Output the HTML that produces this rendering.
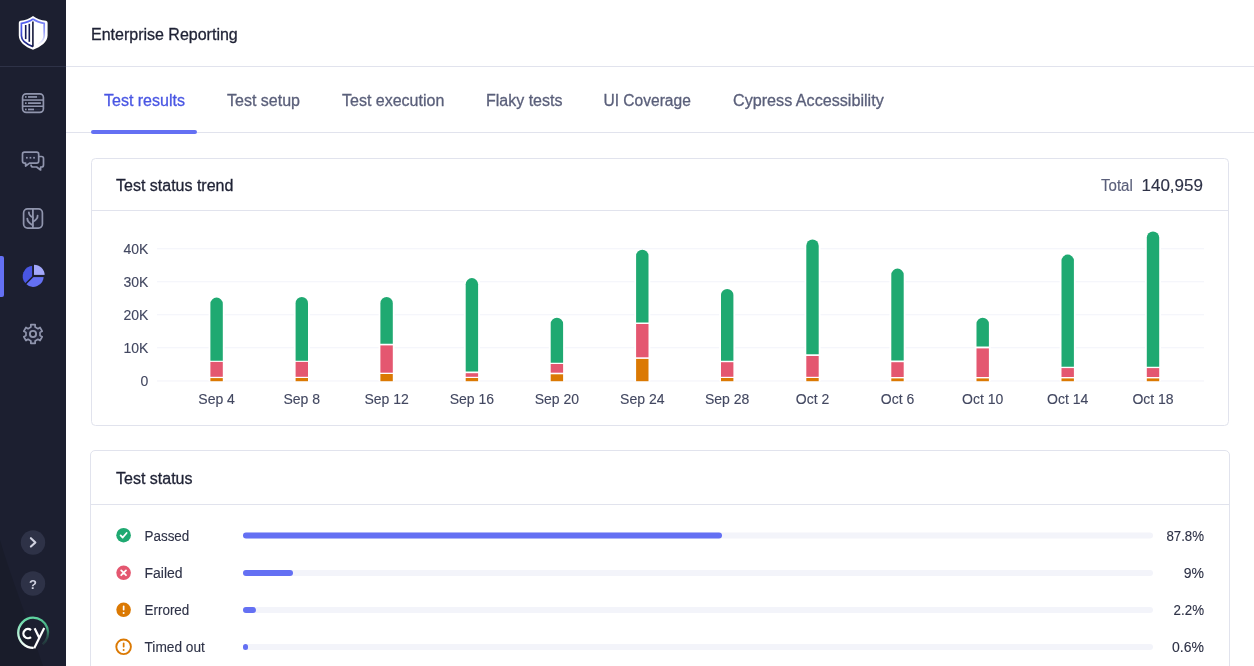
<!DOCTYPE html>
<html><head><meta charset="utf-8">
<style>
html,body{margin:0;padding:0;width:1254px;height:666px;overflow:hidden;background:#fff;}
svg{display:block;will-change:transform;}
text{font-family:"Liberation Sans",sans-serif;}
</style></head><body>
<svg width="1254" height="666" viewBox="0 0 1254 666">
<defs>
<linearGradient id="shl" gradientUnits="userSpaceOnUse" x1="0" y1="19" x2="0" y2="47">
<stop offset="0" stop-color="#5a66f4"/><stop offset="0.45" stop-color="#4450de"/><stop offset="1" stop-color="#141a6a"/>
</linearGradient>
<linearGradient id="shr" gradientUnits="userSpaceOnUse" x1="0" y1="19" x2="0" y2="45">
<stop offset="0" stop-color="#6a74f4"/><stop offset="0.5" stop-color="#9aa1f8"/><stop offset="1" stop-color="#ffffff"/>
</linearGradient>
<linearGradient id="cyl" gradientUnits="userSpaceOnUse" x1="0" y1="648" x2="0" y2="618">
<stop offset="0" stop-color="#ffffff"/><stop offset="0.45" stop-color="#b5f0d6"/><stop offset="1" stop-color="#5fd4a0"/>
</linearGradient>
<linearGradient id="cyr" gradientUnits="userSpaceOnUse" x1="33" y1="618" x2="44" y2="646">
<stop offset="0" stop-color="#5fd4a0"/><stop offset="0.5" stop-color="#44a880"/><stop offset="1" stop-color="#2a5a4c" stop-opacity="0.2"/>
</linearGradient>
</defs>
<!-- sidebar -->
<rect x="0" y="0" width="66" height="666" fill="#1c1f30"/>
<rect x="0" y="66" width="66" height="1" fill="#2e3247"/>
<path d="M0,540 C10,575 28,620 43,666 L0,666 Z" fill="#191c2a"/>
<!-- shield logo -->
<path d="M33,15.9 C36.5,18.6 41,20 46,20.8 Q47.6,21.1 47.6,22.8 L47.6,35.5 C47.6,41.8 41,46.8 33,49.8 C25,46.8 18.8,41.8 18.8,35.5 L18.8,22.8 Q18.8,21.1 20.4,20.8 C25.4,20 29.5,18.6 33,15.9 Z" fill="#fff"/>
<path d="M33,19 C29.8,21.4 26,22.6 21.4,23.4 L21.4,35.8 C21.4,40.4 26.5,44.2 33,46.6" fill="none" stroke="url(#shl)" stroke-width="1.7"/>
<path d="M33,19 C36.2,21.4 40,22.6 44.2,23.4 L44.2,35.8 C44.2,39.5 41.5,42.3 38,44.4" fill="none" stroke="url(#shr)" stroke-width="1.7"/>
<rect x="24.9" y="25" width="1.6" height="14.1" fill="#141a5a"/>
<rect x="28.5" y="23.8" width="1.6" height="18" fill="#141a5a"/>
<rect x="32.1" y="21.5" width="1.6" height="25.2" fill="#161a3e"/>
<!-- database icon -->
<rect x="22.6" y="93.8" width="20.8" height="18.6" rx="3.6" fill="none" stroke="#9095ad" stroke-width="1.7"/>
<rect x="22.6" y="99.3" width="20.8" height="1.5" fill="#9095ad"/>
<rect x="22.6" y="105.5" width="20.8" height="1.5" fill="#9095ad"/>
<g fill="#2a2d42"><rect x="28" y="96.1" width="12.5" height="1.7"/><rect x="28" y="102.3" width="12.5" height="1.7"/><rect x="28" y="108.6" width="12.5" height="1.7"/></g>
<g fill="#9095ad">
<rect x="25" y="96.1" width="1.6" height="1.7"/><rect x="28" y="96.1" width="9" height="1.7"/>
<rect x="25" y="102.3" width="1.6" height="1.7"/><rect x="28" y="102.3" width="12.9" height="1.7"/>
<rect x="25" y="108.6" width="1.6" height="1.7"/><rect x="28" y="108.6" width="6" height="1.7"/>
</g>
<!-- chat icon -->
<g fill="none" stroke="#9095ad" stroke-width="1.7" stroke-linejoin="round">
<path d="M39,156.5 H41.5 Q43.5,156.5 43.5,158.5 V165 Q43.5,167 41.5,167 H40.6 L40.6,170 L36.6,167 H33 Q31,167 31,164.5"/>
<path d="M24.5,152.2 H36.6 Q38.7,152.2 38.7,154.2 V161 Q38.7,163.1 36.6,163.1 H29.6 L25.6,166 L25.6,163.1 H24.5 Q22.5,163.1 22.5,161 V154.2 Q22.5,152.2 24.5,152.2 Z" fill="#22253a"/>
</g>
<g fill="#9095ad"><rect x="26" y="156.9" width="1.7" height="1.7"/><rect x="29.6" y="156.9" width="1.7" height="1.7"/><rect x="33.2" y="156.9" width="1.7" height="1.7"/></g>
<!-- tree icon -->
<rect x="23.6" y="208.9" width="18.8" height="19.2" rx="4" fill="#23263a" stroke="#9095ad" stroke-width="1.7"/>
<g fill="none" stroke="#9095ad" stroke-width="1.8" stroke-linecap="round">
<path d="M32.9,209 V228"/>
<path d="M28.9,212.4 Q28.8,215.6 32.8,217.4"/>
<path d="M27.3,218.6 Q27.3,222.4 32.7,225.2"/>
<path d="M37.6,215.6 Q37.8,219.2 33,221.6"/>
</g>
<!-- active indicator -->
<path d="M0,256 H2 A2,2 0 0 1 4,258 V295 A2,2 0 0 1 2,297 H0 Z" fill="#6470f3"/>
<!-- pie -->
<path d="M34.00,275.40 L34.00,264.70 A10.7,10.7 0 0 1 44.70,275.40 Z" fill="#a3a8fb"/>
<path d="M33.20,276.30 L43.70,276.30 A10.5,10.5 0 0 1 25.78,283.72 Z" fill="#6470f3"/>
<path d="M33.20,276.30 L25.78,283.72 A10.5,10.5 0 0 1 33.20,265.80 Z" fill="#4956e3"/>
<g stroke="#1b1e2e" fill="none"><path d="M32.95,276.30 V262" stroke-width="1.7"/><path d="M32.95,276.00 H47" stroke-width="2.2"/><path d="M33.20,276.30 L23.30,286.20" stroke-width="1.6"/></g>
<!-- gear -->
<path d="M30.89,327.11 L30.84,324.65 L35.16,324.65 L35.11,327.11 L37.91,328.73 L40.02,327.45 L42.18,331.19 L40.02,332.38 L40.02,335.62 L42.18,336.81 L40.02,340.55 L37.91,339.27 L35.11,340.89 L35.16,343.35 L30.84,343.35 L30.89,340.89 L28.09,339.27 L25.98,340.55 L23.82,336.81 L25.98,335.62 L25.98,332.38 L23.82,331.19 L25.98,327.45 L28.09,328.73Z" fill="#22253a" stroke="#9095ad" stroke-width="1.7" stroke-linejoin="round"/>
<circle cx="33" cy="334" r="3.1" fill="#1b1e2e" stroke="#9095ad" stroke-width="1.9"/>
<!-- bottom buttons -->
<circle cx="33" cy="542.5" r="12.2" fill="#2e3247"/>
<path d="M30.9,538.2 L35.4,542.4 L30.9,546.6" fill="none" stroke="#d0d2e0" stroke-width="2.1" stroke-linecap="round" stroke-linejoin="round"/>
<circle cx="33" cy="583.5" r="12.2" fill="#2e3247"/>
<text x="33" y="588.7" text-anchor="middle" font-size="13" font-weight="bold" fill="#d0d2e0">?</text>
<!-- cypress logo -->
<path d="M33.6,647.90 A15.1,15.1 0 0 1 33,617.70" fill="none" stroke="url(#cyl)" stroke-width="2.3"/>
<path d="M33,617.70 A15.1,15.1 0 0 1 42.71,644.37" fill="none" stroke="url(#cyr)" stroke-width="2.3"/>
<path d="M31.0,630.1 A4.6,4.6 0 1 0 31.0,637.1" fill="none" stroke="#fff" stroke-width="2.3"/>
<path d="M34.6,628.2 L39.2,637.8 M44.2,628.0 L34.2,648.3" fill="none" stroke="#fff" stroke-width="2.2"/>
<!-- header -->
<text x="91" y="39.8" font-size="16" fill="#1f2235" stroke="#1f2235" stroke-width="0.3">Enterprise Reporting</text>
<rect x="66" y="66" width="1188" height="1" fill="#e1e3ed"/>
<!-- tabs -->
<text x="104" y="105.9" font-size="16" fill="#4956e3" stroke="#4956e3" stroke-width="0.3">Test results</text>
<text x="227" y="105.9" font-size="16" fill="#5a5f7a" stroke="#5a5f7a" stroke-width="0.3">Test setup</text>
<text x="342" y="105.9" font-size="16" fill="#5a5f7a" stroke="#5a5f7a" stroke-width="0.3">Test execution</text>
<text x="486" y="105.9" font-size="16" fill="#5a5f7a" stroke="#5a5f7a" stroke-width="0.3">Flaky tests</text>
<text x="603.5" y="105.9" font-size="16" fill="#5a5f7a" stroke="#5a5f7a" stroke-width="0.3" textLength="87.3" lengthAdjust="spacingAndGlyphs">UI Coverage</text>
<text x="733" y="105.9" font-size="16" fill="#5a5f7a" stroke="#5a5f7a" stroke-width="0.3" textLength="150.7" lengthAdjust="spacingAndGlyphs">Cypress Accessibility</text>
<rect x="66" y="132" width="1188" height="1" fill="#e1e3ed"/>
<rect x="91" y="130" width="106" height="4" rx="2" fill="#6470f3"/>

<!-- card 1 -->
<rect x="91.5" y="158.5" width="1137" height="267" rx="4" fill="#fff" stroke="#e1e3ed" stroke-width="1"/>
<rect x="92" y="210" width="1136" height="1" fill="#e1e3ed"/>
<text x="116" y="190.7" font-size="16" fill="#1f2235" stroke="#1f2235" stroke-width="0.3">Test status trend</text>
<text x="1101" y="190.7" font-size="16" fill="#5a5f7a" stroke="#5a5f7a" stroke-width="0.15" textLength="31.75" lengthAdjust="spacingAndGlyphs">Total</text>
<text x="1141.5" y="190.7" font-size="17" fill="#2e3247" stroke="#2e3247" stroke-width="0.15">140,959</text>
<g fill="#f3f4fa">
<rect x="157" y="248.2" width="1047" height="1.1"/>
<rect x="157" y="281.2" width="1047" height="1.1"/>
<rect x="157" y="314.2" width="1047" height="1.1"/>
<rect x="157" y="347.2" width="1047" height="1.1"/>
<rect x="157" y="380.4" width="1047" height="1.1"/>
</g>
<text x="148.3" y="254.2" font-size="14" fill="#434861" stroke="#434861" stroke-width="0.12" text-anchor="end">40K</text>
<text x="148.3" y="287.2" font-size="14" fill="#434861" stroke="#434861" stroke-width="0.12" text-anchor="end">30K</text>
<text x="148.3" y="320.2" font-size="14" fill="#434861" stroke="#434861" stroke-width="0.12" text-anchor="end">20K</text>
<text x="148.3" y="353.2" font-size="14" fill="#434861" stroke="#434861" stroke-width="0.12" text-anchor="end">10K</text>
<text x="148.3" y="386.2" font-size="14" fill="#434861" stroke="#434861" stroke-width="0.12" text-anchor="end">0</text>
<rect x="208.60" y="297.60" width="16.00" height="83.60" fill="#fff"/>
<path d="M210.40,360.80 V303.80 A6.20,6.20 0 0 1 222.80,303.80 V360.80 Z" fill="#1fa971"/>
<rect x="210.40" y="361.90" width="12.4" height="14.90" fill="#e45770"/>
<rect x="210.40" y="378.10" width="12.4" height="3.10" fill="#db7903"/>
<text x="216.6" y="404" font-size="14" fill="#434861" stroke="#434861" stroke-width="0.12" text-anchor="middle">Sep 4</text>
<rect x="293.80" y="297.00" width="16.00" height="84.20" fill="#fff"/>
<path d="M295.60,360.80 V303.20 A6.20,6.20 0 0 1 308.00,303.20 V360.80 Z" fill="#1fa971"/>
<rect x="295.60" y="361.90" width="12.4" height="14.90" fill="#e45770"/>
<rect x="295.60" y="378.00" width="12.4" height="3.20" fill="#db7903"/>
<text x="301.8" y="404" font-size="14" fill="#434861" stroke="#434861" stroke-width="0.12" text-anchor="middle">Sep 8</text>
<rect x="378.60" y="297.00" width="16.00" height="84.20" fill="#fff"/>
<path d="M380.40,343.80 V303.20 A6.20,6.20 0 0 1 392.80,303.20 V343.80 Z" fill="#1fa971"/>
<rect x="380.40" y="345.40" width="12.4" height="27.30" fill="#e45770"/>
<rect x="380.40" y="374.00" width="12.4" height="7.20" fill="#db7903"/>
<text x="386.6" y="404" font-size="14" fill="#434861" stroke="#434861" stroke-width="0.12" text-anchor="middle">Sep 12</text>
<rect x="463.90" y="278.10" width="16.00" height="103.10" fill="#fff"/>
<path d="M465.70,371.60 V284.30 A6.20,6.20 0 0 1 478.10,284.30 V371.60 Z" fill="#1fa971"/>
<rect x="465.70" y="373.20" width="12.4" height="3.60" fill="#e45770"/>
<rect x="465.70" y="378.00" width="12.4" height="3.20" fill="#db7903"/>
<text x="471.9" y="404" font-size="14" fill="#434861" stroke="#434861" stroke-width="0.12" text-anchor="middle">Sep 16</text>
<rect x="548.90" y="317.80" width="16.00" height="63.40" fill="#fff"/>
<path d="M550.70,362.70 V324.00 A6.20,6.20 0 0 1 563.10,324.00 V362.70 Z" fill="#1fa971"/>
<rect x="550.70" y="364.00" width="12.4" height="8.70" fill="#e45770"/>
<rect x="550.70" y="374.30" width="12.4" height="6.90" fill="#db7903"/>
<text x="556.9" y="404" font-size="14" fill="#434861" stroke="#434861" stroke-width="0.12" text-anchor="middle">Sep 20</text>
<rect x="634.30" y="249.70" width="16.00" height="131.50" fill="#fff"/>
<path d="M636.10,322.40 V255.90 A6.20,6.20 0 0 1 648.50,255.90 V322.40 Z" fill="#1fa971"/>
<rect x="636.10" y="324.00" width="12.4" height="33.30" fill="#e45770"/>
<rect x="636.10" y="358.90" width="12.4" height="22.30" fill="#db7903"/>
<text x="642.3" y="404" font-size="14" fill="#434861" stroke="#434861" stroke-width="0.12" text-anchor="middle">Sep 24</text>
<rect x="719.20" y="288.90" width="16.00" height="92.30" fill="#fff"/>
<path d="M721.00,360.80 V295.10 A6.20,6.20 0 0 1 733.40,295.10 V360.80 Z" fill="#1fa971"/>
<rect x="721.00" y="362.20" width="12.4" height="14.60" fill="#e45770"/>
<rect x="721.00" y="378.00" width="12.4" height="3.20" fill="#db7903"/>
<text x="727.2" y="404" font-size="14" fill="#434861" stroke="#434861" stroke-width="0.12" text-anchor="middle">Sep 28</text>
<rect x="804.50" y="239.50" width="16.00" height="141.70" fill="#fff"/>
<path d="M806.30,354.30 V245.70 A6.20,6.20 0 0 1 818.70,245.70 V354.30 Z" fill="#1fa971"/>
<rect x="806.30" y="356.00" width="12.4" height="20.80" fill="#e45770"/>
<rect x="806.30" y="378.00" width="12.4" height="3.20" fill="#db7903"/>
<text x="812.5" y="404" font-size="14" fill="#434861" stroke="#434861" stroke-width="0.12" text-anchor="middle">Oct 2</text>
<rect x="889.50" y="268.60" width="16.00" height="112.60" fill="#fff"/>
<path d="M891.30,360.50 V274.80 A6.20,6.20 0 0 1 903.70,274.80 V360.50 Z" fill="#1fa971"/>
<rect x="891.30" y="362.20" width="12.4" height="14.80" fill="#e45770"/>
<rect x="891.30" y="378.40" width="12.4" height="2.80" fill="#db7903"/>
<text x="897.5" y="404" font-size="14" fill="#434861" stroke="#434861" stroke-width="0.12" text-anchor="middle">Oct 6</text>
<rect x="974.70" y="317.80" width="16.00" height="63.40" fill="#fff"/>
<path d="M976.50,346.50 V324.00 A6.20,6.20 0 0 1 988.90,324.00 V346.50 Z" fill="#1fa971"/>
<rect x="976.50" y="348.40" width="12.4" height="28.60" fill="#e45770"/>
<rect x="976.50" y="378.40" width="12.4" height="2.80" fill="#db7903"/>
<text x="982.7" y="404" font-size="14" fill="#434861" stroke="#434861" stroke-width="0.12" text-anchor="middle">Oct 10</text>
<rect x="1059.70" y="254.60" width="16.00" height="126.60" fill="#fff"/>
<path d="M1061.50,366.80 V260.80 A6.20,6.20 0 0 1 1073.90,260.80 V366.80 Z" fill="#1fa971"/>
<rect x="1061.50" y="368.10" width="12.4" height="8.90" fill="#e45770"/>
<rect x="1061.50" y="378.40" width="12.4" height="2.80" fill="#db7903"/>
<text x="1067.7" y="404" font-size="14" fill="#434861" stroke="#434861" stroke-width="0.12" text-anchor="middle">Oct 14</text>
<rect x="1145.00" y="231.40" width="16.00" height="149.80" fill="#fff"/>
<path d="M1146.80,366.80 V237.60 A6.20,6.20 0 0 1 1159.20,237.60 V366.80 Z" fill="#1fa971"/>
<rect x="1146.80" y="368.10" width="12.4" height="8.90" fill="#e45770"/>
<rect x="1146.80" y="378.40" width="12.4" height="2.80" fill="#db7903"/>
<text x="1153.0" y="404" font-size="14" fill="#434861" stroke="#434861" stroke-width="0.12" text-anchor="middle">Oct 18</text>

<!-- card 2 -->
<rect x="90.5" y="450.5" width="1139" height="260" rx="4.5" fill="#fff" stroke="#e1e3ed" stroke-width="1"/>
<rect x="91" y="504" width="1138" height="1" fill="#e1e3ed"/>
<text x="116" y="483.7" font-size="16" fill="#1f2235" stroke="#1f2235" stroke-width="0.3">Test status</text>
<circle cx="123.6" cy="535.2" r="7.3" fill="#1fa971"/>
<path d="M120.6,535.4000000000001 L122.7,537.5 L126.6,533.0" fill="none" stroke="#fff" stroke-width="1.8" stroke-linecap="round" stroke-linejoin="round"/>
<text x="144.5" y="541.0" font-size="14" fill="#2e3247" stroke="#2e3247" stroke-width="0.12" textLength="44.8" lengthAdjust="spacingAndGlyphs">Passed</text>
<rect x="243" y="532.5" width="910" height="6" rx="3" fill="#f3f4fa"/>
<rect x="243" y="532.5" width="479" height="6" rx="3" fill="#6470f3"/>
<text x="1204" y="541.0" font-size="14" fill="#2e3247" stroke="#2e3247" stroke-width="0.12" text-anchor="end" textLength="37.6" lengthAdjust="spacingAndGlyphs">87.8%</text>
<circle cx="123.6" cy="572.8" r="7.3" fill="#e45770"/>
<path d="M121.2,570.4 L126,575.1999999999999 M126,570.4 L121.2,575.1999999999999" fill="none" stroke="#fff" stroke-width="1.8" stroke-linecap="round"/>
<text x="144.5" y="578.1" font-size="14" fill="#2e3247" stroke="#2e3247" stroke-width="0.12">Failed</text>
<rect x="243" y="570.1" width="910" height="6" rx="3" fill="#f3f4fa"/>
<rect x="243" y="570.1" width="50" height="6" rx="3" fill="#6470f3"/>
<text x="1204" y="578.1" font-size="14" fill="#2e3247" stroke="#2e3247" stroke-width="0.12" text-anchor="end">9%</text>
<circle cx="123.6" cy="609.8" r="7.3" fill="#db7903"/>
<rect x="122.8" y="605.5999999999999" width="1.7" height="5" rx="0.8" fill="#fff"/><circle cx="123.65" cy="613.0" r="1" fill="#fff"/>
<text x="144.5" y="615.1" font-size="14" fill="#2e3247" stroke="#2e3247" stroke-width="0.12" textLength="44.8" lengthAdjust="spacingAndGlyphs">Errored</text>
<rect x="243" y="607.1" width="910" height="6" rx="3" fill="#f3f4fa"/>
<rect x="243" y="607.1" width="13" height="6" rx="3" fill="#6470f3"/>
<text x="1204" y="615.1" font-size="14" fill="#2e3247" stroke="#2e3247" stroke-width="0.12" text-anchor="end" textLength="30.4" lengthAdjust="spacingAndGlyphs">2.2%</text>
<circle cx="123.6" cy="646.8" r="7.3" fill="none" stroke="#db7903" stroke-width="1.9"/>
<rect x="122.8" y="642.5999999999999" width="1.7" height="5" rx="0.8" fill="#db7903"/><circle cx="123.65" cy="650.0" r="1" fill="#db7903"/>
<text x="144.5" y="652.1" font-size="14" fill="#2e3247" stroke="#2e3247" stroke-width="0.12" textLength="60.4" lengthAdjust="spacingAndGlyphs">Timed out</text>
<rect x="243" y="644.1" width="910" height="6" rx="3" fill="#f3f4fa"/>
<rect x="243" y="644.1" width="5" height="6" rx="2.5" fill="#6470f3"/>
<text x="1204" y="652.1" font-size="14" fill="#2e3247" stroke="#2e3247" stroke-width="0.12" text-anchor="end">0.6%</text>
</svg>
</body></html>
